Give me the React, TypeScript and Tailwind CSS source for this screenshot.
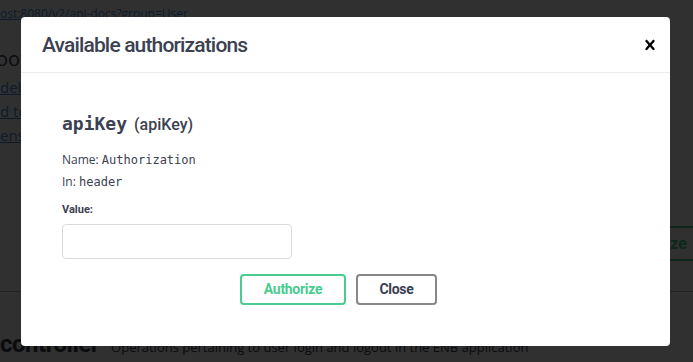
import React from "react";

export default function App() {
  return (
    <div className="relative w-[693px] h-[362px] overflow-hidden bg-white font-['Open_Sans',sans-serif] text-[#3b4151]">
      {/* page behind the dialog */}
      <div className="pt-[5px]">
        <a className="block text-[12px] leading-[18px] text-[#4990e2] underline">
          ost:8080/v2/api-docs?group=User
        </a>
        <p className="-ml-[4px] mt-[22px] text-[20px] leading-[28px]">oot REST API documentation</p>
        <div className="mt-[2px] flex flex-col text-[15px] leading-[24px] text-[#4990e2]">
          <a className="underline">delvery service terms</a>
          <a className="underline">d to developer</a>
          <a className="underline">ense of use</a>
        </div>
        <div className="mt-[79px] flex justify-end">
          <button className="mr-[-20px] h-[35px] w-[100px] rounded-[4px] border-2 border-[#49cc90] pr-[24px] text-right font-['Roboto',sans-serif] text-[16px] font-bold text-[#49cc90]">
            Authorize
          </button>
        </div>
        <div className="mt-[30px] border-t border-[#3b4151]/40" />
        <div className="mt-[34px] flex items-baseline gap-[12px] whitespace-nowrap">
          <span className="font-['Roboto',sans-serif] text-[24px] font-bold tracking-[-0.5px]">controller</span>
          <span className="text-[13px]">Operations pertaining to user login and logout in the ENB application</span>
        </div>
      </div>

      {/* overlay + dialog */}
      <div className="absolute inset-0 bg-[rgba(0,0,0,0.81)] pl-[21px] pt-[17px]">
        <div className="h-[329px] w-[649px] rounded-[4px] bg-white">
          <div className="flex h-[56px] items-center justify-between border-b border-[#ebebeb] pl-[21px] pr-[10px]">
            <h3 className="pt-[2px] font-['Roboto',sans-serif] text-[21px] font-medium tracking-[-0.85px] text-[#3b4151]">
              Available authorizations
            </h3>
            <button className="flex h-[20px] w-[20px] items-center justify-center">
              <svg width="20" height="20" viewBox="0 0 20 20">
                <path
                  fill="#000"
                  d="M14.348 14.849c-.469.469-1.229.469-1.697 0L10 11.819l-2.651 3.029c-.469.469-1.229.469-1.697 0-.469-.469-.469-1.229 0-1.697l2.758-3.15-2.759-3.152c-.469-.469-.469-1.228 0-1.697.469-.469 1.228-.469 1.697 0L10 8.183l2.651-3.031c.469-.469 1.228-.469 1.697 0 .469.469.469 1.229 0 1.697l-2.758 3.152 2.758 3.150c.469.469.469 1.229 0 1.698z"
                />
              </svg>
            </button>
          </div>

          <div className="pl-[21px] pr-[35px] pt-[39px]">
            <div className="pl-[20px]">
              <h4 className="flex items-baseline gap-[7px] leading-[24px]">
                <code className="font-['DejaVu_Sans_Mono',monospace] text-[18px] font-bold">apiKey</code>
                <span className="font-['Roboto',sans-serif] text-[16px] font-medium">(apiKey)</span>
              </h4>
              <div className="mt-[12px] text-[12px] leading-[22px]">
                <p>
                  Name: <code className="font-['DejaVu_Sans_Mono',monospace]">Authorization</code>
                </p>
                <p>
                  In: <code className="font-['DejaVu_Sans_Mono',monospace]">header</code>
                </p>
              </div>
              <label className="mt-[9px] block font-['Roboto',sans-serif] text-[11px] font-bold leading-[16px]">
                Value:
              </label>
              <input
                type="text"
                className="mt-[6px] block h-[35px] w-[230px] rounded-[4px] border border-[#d9d9d9] bg-white outline-none"
              />
            </div>
            <div className="mt-[15px] flex justify-center gap-[10px]">
              <button className="h-[31px] w-[106px] rounded-[4px] border-2 border-[#49cc90] font-['Roboto',sans-serif] text-[14px] font-bold tracking-[-0.3px] text-[#49cc90]">
                Authorize
              </button>
              <button className="h-[31px] w-[81px] rounded-[4px] border-2 border-[#888] font-['Roboto',sans-serif] text-[14px] font-bold tracking-[-0.3px] text-[#3b4151]">
                Close
              </button>
            </div>
          </div>
        </div>
      </div>
    </div>
  );
}
